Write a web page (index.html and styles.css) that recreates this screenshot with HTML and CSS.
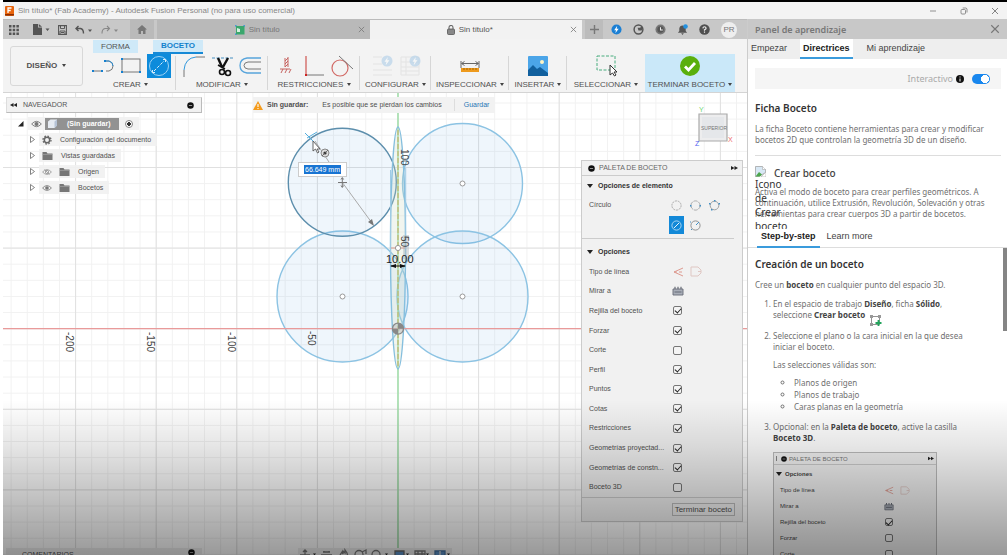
FILE: index.html
```html
<!DOCTYPE html>
<html lang="es">
<head>
<meta charset="utf-8">
<title>Sin título* (Fab Academy) - Autodesk Fusion Personal</title>
<link rel="stylesheet" href="styles.css">
</head>
<body>
<svg class="defs" width="0" height="0" aria-hidden="true">
  <symbol id="folder" viewBox="0 0 10 9"><path d="M0 1h4l1 1.500h5V9H0z" fill="#777"/><path d="M0 3.500h10" stroke="#aaa" stroke-width=".6"/></symbol>
  <symbol id="eye" viewBox="0 0 12 8"><path d="M.7 4Q6-1.800 11.300 4 6 9.800.700 4z" fill="none" stroke="#777" stroke-width="1"/><circle cx="6" cy="4" r="2.200" fill="#777"/></symbol>
  <symbol id="minus-dot" viewBox="0 0 6 6"><circle cx="3" cy="3" r="2.800" fill="#111"/><path d="M1.600 3h2.800" stroke="#ccc" stroke-width=".6"/></symbol>
  <symbol id="ffwd" viewBox="0 0 8 6"><path d="M0 .8 4 3 0 5.200zM4 .8 8 3 4 5.200z" fill="#222"/></symbol>
  <symbol id="cross" viewBox="0 0 8 8"><path d="M1 1l6 6M7 1L1 7" stroke="#777" stroke-width=".9"/></symbol>
  <symbol id="linetype" viewBox="0 0 12 10"><path d="M11 1 2 5l9 4" fill="none" stroke="#dd9a90" stroke-width="1"/><path d="M2 5h9" stroke="#dd9a90" stroke-width="1" stroke-dasharray="3 2"/></symbol>
  <symbol id="centerline" viewBox="0 0 12 11"><path d="M1 1h7l3 3v3l-3 3H1zM8 5.500h3" fill="none" stroke="#dfc7c3" stroke-width="1"/></symbol>
  <symbol id="lookat" viewBox="0 0 12 10"><path d="M1 3h10v6H1z" fill="#a9aeb8" stroke="#666b76" stroke-width=".9"/><path d="M3 3V.8M6 3V.8M9 3V.8M2.500 6h7" stroke="#666b76" stroke-width="1.200"/></symbol>
  <symbol id="bolt" viewBox="0 0 12 12"><circle cx="6" cy="6" r="5.500"/><path d="M6.800 2 3.500 6.700h2l-.8 3.500 3.700-4.900H6.200z" fill="#fff"/></symbol>
</svg>

<div class="app">
  <header class="titlebar">
    <svg width="9" height="10" viewBox="0 0 9 10"><rect width="9" height="10" rx="1" fill="#e8640c"/><path d="M0 8h9v1.500H0z" fill="#8c2e00"/><path d="M3 7V2h3.500M3 4.500h2.700" fill="none" stroke="#fff" stroke-width="1.300"/></svg>
    <h1>Sin título* (Fab Academy) - Autodesk Fusion Personal (no para uso comercial)</h1>
    <div class="window-buttons">
      <button aria-label="Minimizar"><svg width="8" height="8" viewBox="0 0 8 8"><path d="M1 4h6" stroke="#777" stroke-width=".8"/></svg></button>
      <button aria-label="Restaurar"><svg width="8" height="8" viewBox="0 0 8 8"><rect x="1" y="2.500" width="4.500" height="4.500" rx="1" fill="none" stroke="#777" stroke-width=".8"/><path d="M2.700 1h3.500L7 2v3.500" fill="none" stroke="#777" stroke-width=".8"/></svg></button>
      <button aria-label="Cerrar"><svg width="8" height="8"><use href="#cross"/></svg></button>
    </div>
  </header>

  <div class="columns">
    <main class="workspace">
      <div class="tabbar">
        <div class="quick">
          <button aria-label="Panel de datos"><svg width="10" height="10" viewBox="0 0 10 10" fill="#555"><path d="M0 0h2.500v2.500H0zM3.700 0h2.500v2.500H3.700zM7.400 0h2.500v2.500H7.400zM0 3.700h2.500v2.500H0zM3.700 3.700h2.500v2.500H3.700zM7.400 3.700h2.500v2.500H7.400zM0 7.400h2.500v2.500H0zM3.700 7.400h2.500v2.500H3.700zM7.400 7.400h2.500v2.500H7.400z"/></svg></button>
          <button aria-label="Archivo"><svg width="17" height="11" viewBox="0 0 17 11" fill="#555"><path d="M0 0h5v3.500h4V11H0zM5.800 0 9 2.800H5.800zM12.500 4.500h4l-2 2.500z"/></svg></button>
          <button aria-label="Guardar"><svg width="9" height="10" viewBox="0 0 9 10"><path d="M.6.600h7.800v8.800H.6z" fill="#ccc" stroke="#555" stroke-width="1.100"/><path d="M2.500.6v3h4v-3M2 9V6h5v3M3 7.500h3" fill="none" stroke="#555"/></svg></button>
          <button aria-label="Deshacer"><svg width="18" height="10" viewBox="0 0 18 10"><path d="M3.500 1 1 3.500 3.500 6M1 3.500h4.500Q8.500 4 8.500 8.500" fill="none" stroke="#555" stroke-width="1.400"/><path d="M13 4.500h4L15 7z" fill="#555"/></svg></button>
          <button aria-label="Rehacer"><svg width="18" height="10" viewBox="0 0 18 10"><path d="M6 1l2.500 2.500L6 6M8.500 3.500H4Q1 4 1 8.500" fill="none" stroke="#888" stroke-width="1.100"/><path d="M13 4.500h4L15 7z" fill="#888"/></svg></button>
        </div>
        <button class="home" aria-label="Inicio"><svg width="10" height="9" viewBox="0 0 10 9"><path d="M5 0 0 4.500h1.500V9h2.500V6h2v3h2.500V4.500H10z" fill="#777"/></svg></button>
        <div class="doc-tab">
          <span class="doc-name"><svg width="10" height="10" viewBox="0 0 10 10"><rect x="1" y="1" width="8.500" height="8.500" fill="#3aa76d"/><path d="M2 7V3l3 1v3z" fill="#d5f0df"/><path d="M0 2V0h2M8 0h2v2M0 8v2h2" stroke="#2d8fd8" fill="none"/></svg>Sin título</span>
          <button aria-label="Cerrar pestaña"><svg width="7" height="7"><use href="#cross"/></svg></button>
        </div>
        <div class="doc-tab active">
          <span class="doc-name"><svg width="8" height="10" viewBox="0 0 8 10"><rect x=".5" y="4" width="7" height="5.500" rx="1" fill="#888" stroke="#555" stroke-width=".8"/><path d="M2 4V2.500a2 2 0 0 1 4 0V4" fill="none" stroke="#666" stroke-width="1.100"/></svg>Sin título*</span>
          <button aria-label="Cerrar pestaña"><svg width="7" height="7"><use href="#cross"/></svg></button>
        </div>
        <button class="plus" aria-label="Nuevo diseño"><svg width="9" height="9" viewBox="0 0 9 9"><path d="M4.500 0v9M0 4.500h9" stroke="#777" stroke-width="1.400"/></svg></button>
        <div class="status">
          <button aria-label="Extensiones"><svg width="11" height="11" fill="#1b7fd4"><use href="#bolt"/></svg></button>
          <button aria-label="Actualizar"><svg width="11" height="11" viewBox="0 0 12 12"><circle cx="6" cy="6" r="4.800" fill="none" stroke="#555" stroke-width="1.600"/><path d="M5 4h3l1-2 2 2-1.500 3H6z" fill="#555"/></svg></button>
          <button aria-label="Trabajos"><svg width="11" height="11" viewBox="0 0 12 12"><circle cx="6" cy="6" r="5.500" fill="#777"/><circle cx="6" cy="6" r="3.500" fill="#555"/><path d="M6 3.500V6.500h2.500" fill="none" stroke="#eee" stroke-width="1.100"/></svg></button>
          <button aria-label="Notificaciones"><svg width="11" height="11" viewBox="0 0 12 12"><path d="M1 9.500 2.500 7.500V5Q3 1.500 6 1.500T9.500 5v2.500l1.500 2zM4.500 10h3L6 12z" fill="#555"/><circle cx="9.300" cy="2.700" r="2.500" fill="#2391e0"/></svg></button>
          <button aria-label="Ayuda"><svg width="11" height="11" viewBox="0 0 12 12"><circle cx="6" cy="6" r="5.700" fill="#505050"/><path d="M4.200 4.700Q4.500 3 6 3t1.700 1.500Q7.700 5.500 6 6.200V7.300M6 8.300v1.300" fill="none" stroke="#eee" stroke-width="1.300"/></svg></button>
          <button class="avatar">PR</button>
        </div>
      </div>

      <div class="toolbar">
        <button class="mode">DISEÑO <i class="caret"></i></button>
        <div class="ribbon">
          <nav class="ribbon-tabs"><button>FORMA</button><button class="on">BOCETO</button></nav>
          <div class="groups">
            <section class="group first">
              <div class="tools">
                <svg width="24" height="24" viewBox="0 0 24 24"><path d="M2 17h9M15 7h3q4 1 4 5 0 4-4 5h-3" fill="none" stroke="#777" stroke-width="1"/><path d="M14 7h4q4 1 4 5" fill="none" stroke="#2c8cd0"/><path d="M1 16h2v2H1zM10 16h2v2h-2zM13 6h2v2h-2z" fill="#1580d0"/></svg>
                <svg width="24" height="24" viewBox="0 0 24 24"><rect x="3" y="5" width="18" height="13" fill="none" stroke="#777"/><path d="M2 4h2v2H2zM20 17h2v2h-2zM2 17h2v2H2z" fill="#1580d0"/></svg>
                <svg class="selected" width="24" height="24" viewBox="0 0 24 24"><circle cx="12" cy="12" r="9.500" fill="none" stroke="#9fd2f3"/><path d="M7 17 17 7" stroke="#d8effc" stroke-dasharray="3 1.500"/><path d="M5.500 16v2.500H8M16 5.500h2.500V8" fill="none" stroke="#d8effc"/></svg>
              </div>
              <button>CREAR <i class="caret"></i></button>
            </section>
            <section class="group">
              <div class="tools">
                <svg width="24" height="24" viewBox="0 0 24 24"><path d="M2 23V16" stroke="#777"/><path d="M2 16Q3 4 14 3" fill="none" stroke="#2f97dc"/><path d="M14 3h9" stroke="#777"/></svg>
                <svg width="24" height="24" viewBox="0 0 24 24"><path d="M2 4h21" stroke="#458fc2" stroke-dasharray="3 1.500"/><path d="M8 4l4 9M18 4l-5 9" stroke="#111" stroke-width="2.400"/><path d="M8 11l7 4" stroke="#111" stroke-width="1.600"/><circle cx="12" cy="18" r="2.500" fill="none" stroke="#111" stroke-width="1.600"/><circle cx="18" cy="19" r="2.500" fill="none" stroke="#111" stroke-width="1.600"/></svg>
                <svg width="24" height="24" viewBox="0 0 24 24"><path d="M23 4H9q-7 1-7 7.500T9 19h14" fill="none" stroke="#58a5dc" stroke-width="1.300"/><path d="M23 8H10q-4 .5-4 3.500T10 15h13" fill="none" stroke="#777"/></svg>
              </div>
              <button>MODIFICAR <i class="caret"></i></button>
            </section>
            <section class="group">
              <div class="tools">
                <svg width="24" height="24" viewBox="0 0 24 24" fill="none" stroke="#c66461"><path d="M11 4v9M14 3v10M6 15h10M7 19l2-4M11 19l2-4M15 19l2-4M11 7l3-3M11 10l3-3M11 13l3-3"/></svg>
                <svg width="24" height="24" viewBox="0 0 24 24"><path d="M4 2v19" stroke="#cf5551" stroke-width="1.200"/><path d="M4 21h18" stroke="#777"/><path d="M3 20h2v2H3z" fill="#c22"/></svg>
                <svg width="24" height="24" viewBox="0 0 24 24"><circle cx="10" cy="14" r="8" fill="none" stroke="#d26965" stroke-width="1.200"/><path d="M9 2l14 13" stroke="#777"/></svg>
              </div>
              <button>RESTRICCIONES <i class="caret"></i></button>
            </section>
            <section class="group faded">
              <div class="tools">
                <svg width="24" height="24" viewBox="0 0 24 24"><path d="M3 3h9M3 10h9M3 16h19M3 21h19" stroke="#ddd"/><svg x="11" y="1" width="12" height="12" fill="#91c0e5"><use href="#bolt"/></svg></svg>
                <svg width="24" height="24" viewBox="0 0 24 24"><path d="M3 3h18v18H3zM3 8h18M3 13h18M3 17h18M8 3v18" fill="none" stroke="#ddd"/><svg x="11" y="1" width="12" height="12" fill="#91c0e5"><use href="#bolt"/></svg></svg>
              </div>
              <button>CONFIGURAR <i class="caret"></i></button>
            </section>
            <section class="group">
              <div class="tools"><svg width="24" height="24" viewBox="0 0 24 24"><path d="M3 7v7M21 7v7M4 9.500h16M6.500 7.500l-3 2 3 2M17.500 7.500l3 2-3 2" fill="none" stroke="#666"/><path d="M3 14h18v4H3z" fill="#ee9a1d"/><path d="M6 14v2M9 14v2M12 14v2M15 14v2M18 14v2" stroke="#a96700"/></svg></div>
              <button>INSPECCIONAR <i class="caret"></i></button>
            </section>
            <section class="group">
              <div class="tools"><svg width="24" height="24" viewBox="0 0 24 24"><rect x="2" y="2" width="20" height="20" rx="1" fill="#4ba5e8"/><path d="M2 16l5-5 4 4 3-2 8 6v3H2z" fill="#11609e"/><circle cx="16" cy="8" r="2" fill="#fff5c5"/></svg></div>
              <button>INSERTAR <i class="caret"></i></button>
            </section>
            <section class="group">
              <div class="tools"><svg width="24" height="24" viewBox="0 0 24 24"><rect x="3" y="2" width="18" height="14" fill="none" stroke="#48ac7e" stroke-dasharray="3 1.500"/><path d="M16 11v10l2.500-2 2 3 1.500-1-2-3h3z" fill="#fff" stroke="#333"/></svg></div>
              <button>SELECCIONAR <i class="caret"></i></button>
            </section>
            <section class="group finish">
              <div class="tools"><svg width="24" height="24" viewBox="0 0 24 24"><circle cx="12" cy="12" r="10" fill="#5aaf0c"/><path d="M7 12.500l3.500 3.500 6.500-7" fill="none" stroke="#fff" stroke-width="2.800"/></svg></div>
              <button>TERMINAR BOCETO <i class="caret"></i></button>
            </section>
          </div>
        </div>
      </div>

      <div class="canvas">
        <svg class="drawing" viewBox="3 93 744 462" preserveAspectRatio="xMinYMin slice">
          <defs>
            <pattern id="minor" x="397.500" y="328.200" width="16.120" height="16.120" patternUnits="userSpaceOnUse"><path d="M.5 0v16.120M0 .5h16.120" stroke="#f1f1f1" fill="none"/></pattern>
            <pattern id="major" x="397.500" y="328.200" width="80.600" height="80.600" patternUnits="userSpaceOnUse"><path d="M.5 0v80.600M0 .5h80.600" stroke="#e0e0e0" fill="none"/></pattern>
          </defs>
          <rect x="3" y="93" width="744" height="462" fill="#fff"/>
          <rect x="3" y="93" width="744" height="462" fill="url(#minor)"/>
          <rect x="3" y="93" width="744" height="462" fill="url(#major)"/>
          <g fill="#4a9ee0" fill-opacity=".09" stroke="#8cc3e3" stroke-width="1.400">
            <circle cx="462.500" cy="183.500" r="60"/>
            <circle cx="342.500" cy="296.500" r="65.500"/>
            <circle cx="462.500" cy="296.500" r="65.500"/>
            <circle cx="342.300" cy="182.300" r="54" stroke="#5c8eac"/>
          </g>
          <path d="M3 328.700h744" stroke="#e99a9a" stroke-width="1.200"/>
          <path d="M398 93v455" stroke="#8ddc98" stroke-width="1.200"/>
          <ellipse cx="398" cy="248" rx="7.500" ry="121" fill="#c8d9c0" fill-opacity=".25" stroke="#86bfde" stroke-width="1.400"/>
          <path d="M398 130v236" stroke="#c5b061" stroke-dasharray="5 2"/>
          <path d="M390.500 170v88M405.700 168v90" stroke="#9fcbe4"/>
          <path d="M391 248h14" stroke="#db9a90"/>
          <path d="M404 235v24M406 235v24M408 235v24" stroke="#a5aeb5" stroke-width=".8"/>
          <g fill="#fff" stroke="#999"><circle cx="462.500" cy="183.500" r="2.500"/><circle cx="342.500" cy="296.500" r="2.500"/><circle cx="462.500" cy="296.500" r="2.500"/><circle cx="398" cy="248" r="2.600"/></g>
          <circle cx="398" cy="328.700" r="5.500" fill="#bbb" fill-opacity=".5" stroke="#888" stroke-width="1.300"/><path d="M398 328.700v-5.500a5.500 5.500 0 0 1 5.500 5.500zM398 328.700v5.500a5.500 5.500 0 0 1-5.500-5.500z" fill="#888"/>
          <path d="M342 182l30 41M315 141l24 36" stroke="#aaa" stroke-width="1"/>
          <path d="M374 226l-6-4 4-3z" fill="#777"/>
          <path d="M342.300 178v9M338 182.500h9M341 179.500l1.300-2 1.300 2M341 185.500l1.300 2 1.300-2" fill="none" stroke="#777"/>
          <path d="M305 133l9 9M307 138l10-6" stroke="#54aede" stroke-width="1"/>
          <path d="M313 141v10l2.500-2 2 4 1.500-1-2-3h3z" fill="#fff" stroke="#555" stroke-width=".9"/>
          <circle cx="325" cy="153" r="4" fill="#ddd" stroke="#888"/><circle cx="325" cy="153" r="1.600" fill="#333"/><path d="M322 156l6-6" stroke="#555" stroke-width=".8"/>
          <path d="M391 266h14" stroke="#111"/><path d="M390 266l6-2v4zM406 266l-6-2v4z" fill="#111"/>
          <g class="ruler">
            <text transform="translate(401 149) rotate(90)">100</text>
            <text transform="translate(401 236) rotate(90)">50</text>
            <text transform="translate(308 331) rotate(90)">-50</text>
            <text transform="translate(228 332) rotate(90)">-100</text>
            <text transform="translate(147 332) rotate(90)">-150</text>
            <text transform="translate(66 332) rotate(90)">-200</text>
          </g>
          <text class="dim" x="386" y="263">10.00</text>
          <path d="M699 114h28v27h-28z" fill="#ededee" stroke="#aaa" stroke-width="1.200"/><path d="M702 117h22v21h-22z" fill="#e5e7ea"/>
          <g class="cube"><text x="701" y="130" fill="#777">SUPERIOR</text><text x="699" y="112" class="axis" fill="#6ed672">Y</text><text x="728" y="142" class="axis" fill="#ee6c6c">X</text><text x="695" y="146" class="axis" fill="#4f5df0">Z</text></g>
        </svg>

        <aside class="browser">
          <header class="panel-head"><svg class="flip" width="7" height="6"><use href="#ffwd"/></svg><span>NAVEGADOR</span><svg width="7" height="7"><use href="#minus-dot"/></svg></header>
          <ul class="tree">
            <li class="root"><svg class="arrow" width="6" height="6" viewBox="0 0 6 6"><path d="M5.500 0v5.500H0z" fill="#222"/></svg><span class="item"><svg width="11" height="8"><use href="#eye"/></svg><b><svg width="9" height="9" viewBox="0 0 9 9"><path d="M0 2.500 2.500.500H9V6.500L6.500 9H0z" fill="#e6ebf2"/><path d="M6.500 9V2.500L9 .5v6z" fill="#b6c3d6"/></svg>(Sin guardar)</b><input type="radio" checked aria-label="Activar componente"></span></li>
            <li><svg class="arrow" width="5" height="7" viewBox="0 0 5 7"><path d="M.5.500 4.500 3.500.500 6.500z" fill="#fff" stroke="#666" stroke-width=".8"/></svg><span class="item"><svg width="10" height="10" viewBox="0 0 10 10"><circle cx="5" cy="5" r="2.700" fill="none" stroke="#666" stroke-width="1.500"/><circle cx="5" cy="5" r="4" fill="none" stroke="#666" stroke-width="1.300" stroke-dasharray="1.600 1.540"/></svg><span>Configuración del documento</span></span></li>
            <li><svg class="arrow" width="5" height="7" viewBox="0 0 5 7"><path d="M.5.500 4.500 3.500.500 6.500z" fill="#fff" stroke="#666" stroke-width=".8"/></svg><span class="item"><svg width="11" height="9"><use href="#folder"/></svg><span>Vistas guardadas</span></span></li>
            <li><svg class="arrow" width="5" height="7" viewBox="0 0 5 7"><path d="M.5.500 4.500 3.500.500 6.500z" fill="#fff" stroke="#666" stroke-width=".8"/></svg><span class="item"><svg width="10" height="8" viewBox="0 0 12 8"><path d="M.7 4Q6-1.800 11.300 4 6 9.800.700 4zM3 1l6 6" fill="none" stroke="#999"/><circle cx="6" cy="4" r="2" fill="none" stroke="#999"/></svg><svg width="11" height="9"><use href="#folder"/></svg><span>Origen</span></span></li>
            <li><svg class="arrow" width="5" height="7" viewBox="0 0 5 7"><path d="M.5.500 4.500 3.500.500 6.500z" fill="#fff" stroke="#666" stroke-width=".8"/></svg><span class="item"><svg width="10" height="8"><use href="#eye"/></svg><svg width="11" height="9"><use href="#folder"/></svg><span>Bocetos</span></span></li>
          </ul>
        </aside>

        <div class="notice"><svg width="10" height="9" viewBox="0 0 10 9"><path d="M5 0l5 9H0z" fill="#f49b1c"/><path d="M5 3v3M5 7v1" stroke="#fff" stroke-width="1.100"/></svg><b>Sin guardar:</b><span>Es posible que se pierdan los cambios</span><a href="#guardar">Guardar</a></div>

        <input class="dim-input" aria-label="Diámetro" value="66.649 mm">

        <aside class="palette">
          <header><svg width="7" height="7"><use href="#minus-dot"/></svg><span>PALETA DE BOCETO</span><svg width="7" height="6"><use href="#ffwd"/></svg></header>
          <h2>Opciones de elemento</h2>
          <div class="circle-types">
            <span>Círculo</span>
            <div class="choices">
              <button aria-label="Centro y diámetro"><svg width="11" height="11" viewBox="0 0 11 11"><circle cx="5.500" cy="5.500" r="4.600" fill="none" stroke="#999" stroke-width=".8" stroke-dasharray="2 .8"/></svg></button>
              <button aria-label="Dos puntos"><svg width="11" height="11" viewBox="0 0 11 11"><circle cx="5.500" cy="5.500" r="4.600" fill="none" stroke="#999" stroke-width=".8" stroke-dasharray="4 .8"/><path d="M0 5h1.500v1.500H0zM9.500 5H11v1.500H9.500z" fill="#438fc5"/></svg></button>
              <button aria-label="Tres puntos"><svg width="11" height="11" viewBox="0 0 11 11"><circle cx="5.500" cy="5.500" r="4.300" fill="none" stroke="#999" stroke-width=".9"/><path d="M5 0h1.500v1.500H5zM0 3h1.500v1.500H0zM9.500 3H11v1.500H9.500zM2 9h1.500v1.500H2z" fill="#438fc5"/></svg></button>
              <button class="on" aria-label="Dos tangentes"><svg width="11" height="11" viewBox="0 0 11 11"><circle cx="5.500" cy="5.500" r="4.600" fill="none" stroke="#b9def5" stroke-width=".9"/><path d="M3 8l5-5" stroke="#fff" stroke-width=".9"/></svg></button>
              <button aria-label="Tres tangentes"><svg width="11" height="11" viewBox="0 0 11 11"><circle cx="5.500" cy="5.500" r="4.600" fill="none" stroke="#888" stroke-width=".9"/><path d="M6 5l3-3M0 1v2M1 9l1 1" stroke="#438fc5"/></svg></button>
            </div>
          </div>
          <h2>Opciones</h2>
          <div class="options">
            <div class="row"><span>Tipo de línea</span><svg width="12" height="10"><use href="#linetype"/></svg><svg width="12" height="11"><use href="#centerline"/></svg></div>
            <div class="row"><span>Mirar a</span><svg width="12" height="10"><use href="#lookat"/></svg></div>
            <label class="row"><span>Rejilla del boceto</span><input type="checkbox" checked></label>
            <label class="row"><span>Forzar</span><input type="checkbox" checked></label>
            <label class="row"><span>Corte</span><input type="checkbox"></label>
            <label class="row"><span>Perfil</span><input type="checkbox" checked></label>
            <label class="row"><span>Puntos</span><input type="checkbox" checked></label>
            <label class="row"><span>Cotas</span><input type="checkbox" checked></label>
            <label class="row"><span>Restricciones</span><input type="checkbox" checked></label>
            <label class="row"><span>Geometrías proyectad...</span><input type="checkbox" checked></label>
            <label class="row"><span>Geometrías de constn...</span><input type="checkbox" checked></label>
            <label class="row"><span>Boceto 3D</span><input type="checkbox"></label>
          </div>
          <footer><button>Terminar boceto</button></footer>
        </aside>

        <div class="comments"><span>COMENTARIOS</span><svg width="7" height="7"><use href="#minus-dot"/></svg></div>
        <div class="navbar">
          <svg width="154" height="14" viewBox="0 0 154 14" fill="none" stroke="#777" stroke-width="1.300"><path d="M7 2v10M2 7h10M5 4l2-2 2 2M25 4h7M23 7h11M26 4v-1M31 4v-1M42 7l2-3 1 2V3l2 2V2l2 3 1 4"/><circle cx="61" cy="6.500" r="4"/><path d="M64 4l4-2v4"/><circle cx="78" cy="6.500" r="4"/><path d="M97 3h9v7h-9z" fill="#5a8fc5" stroke="#666"/><path d="M117 3h10v7h-10zM117 6h10M120 3v7M124 3v7"/><path d="M137 3h10v7h-10z" fill="#5a8fc5" stroke="#4672a0"/><path d="M142 3v7" stroke="#ddd"/><path d="M15 5.500h3l-1.500 2zM87 5.500h3l-1.500 2zM108 5.500h3l-1.500 2zM128 5.500h3l-1.500 2zM149 5.500h3l-1.500 2z" fill="#222" stroke="none"/></svg>
        </div>
      </div>
    </main>

    <aside class="learn">
      <header class="learn-head"><h2>Panel de aprendizaje</h2><button aria-label="Cerrar panel"><svg width="10" height="10"><use href="#cross"/></svg></button></header>
      <nav class="learn-tabs"><button>Empezar</button><button class="on">Directrices</button><button>Mi aprendizaje</button></nav>
      <div class="intro">
        <label class="interactive"><span>Interactivo</span><svg width="8" height="8" viewBox="0 0 8 8"><circle cx="4" cy="4" r="4" fill="#111"/><path d="M4 1.500v1M4 3.500v3" stroke="#fff"/></svg><input type="checkbox" role="switch" checked></label>
        <h3>Ficha Boceto</h3>
        <p>La ficha Boceto contiene herramientas para crear y modificar bocetos 2D que controlan la geometría 3D de un diseño.</p>
        <hr>
        <div class="command">
          <div class="broken"><svg width="11" height="11" viewBox="0 0 11 11"><path d="M.5.500h7l3 3v3L4 10.500H.5z" fill="#d8e8f5" stroke="#999" stroke-width=".7"/><path d="M.5 10.500 4 6l3 2.500-2 2z" fill="#4ca64c"/><path d="M7.500.5v3h3M11 6 6 11h5z" fill="#fff" stroke="#aaa" stroke-width=".6"/></svg><span>Icono de Crear boceto</span></div>
          <h4>Crear boceto</h4>
          <p>Activa el modo de boceto para crear perfiles geométricos. A continuación, utilice Extrusión, Revolución, Solevación y otras herramientas para crear cuerpos 3D a partir de bocetos.</p>
        </div>
      </div>
      <nav class="step-tabs"><button class="on">Step-by-step</button><button>Learn more</button></nav>
      <article class="lesson">
        <h3>Creación de un boceto</h3>
        <p>Cree un <b>boceto</b> en cualquier punto del espacio 3D.</p>
        <ol>
          <li>En el espacio de trabajo <b>Diseño</b>, ficha <b>Sólido</b>,<br>seleccione <b>Crear boceto</b> <svg width="12" height="11" viewBox="0 0 12 11"><path d="M1.500 1.500h8v8h-8z" fill="none" stroke="#777" stroke-width=".8"/><path d="M0 0h3v3H0zM8 0h3v3H8zM0 8h3v3H0z" fill="#999"/><path d="M8.500 5v6M5.500 8h6" stroke="#22a45c" stroke-width="1.800"/></svg></li>
          <li>Seleccione el plano o la cara inicial en la que desea iniciar el boceto.
            <p>Las selecciones válidas son:</p>
            <ul><li>Planos de origen</li><li>Planos de trabajo</li><li>Caras planas en la geometría</li></ul>
          </li>
          <li>Opcional: en la <b>Paleta de boceto</b>, active la casilla<br><b>Boceto 3D</b>.
            <div class="sample">
              <header><i></i><svg width="6" height="6"><use href="#minus-dot"/></svg><span>PALETA DE BOCETO</span><svg width="6" height="5"><use href="#ffwd"/></svg></header>
              <h5>Opciones</h5>
              <div class="row"><span>Tipo de línea</span><svg width="10" height="9"><use href="#linetype"/></svg><svg width="10" height="9"><use href="#centerline"/></svg></div>
              <div class="row"><span>Mirar a</span><svg width="10" height="9"><use href="#lookat"/></svg></div>
              <label class="row"><span>Rejilla del boceto</span><input type="checkbox" checked></label>
              <label class="row"><span>Forzar</span><input type="checkbox"></label>
              <label class="row"><span>Corte</span><input type="checkbox"></label>
            </div>
          </li>
        </ol>
        <div class="thumb"></div>
      </article>
    </aside>
  </div>
  <div class="shade"></div>
</div>
</body>
</html>
```
FILE: styles.css
```css
* { box-sizing: border-box; }
body { margin: 0; background: #fff; font: 8px/12px "Liberation Sans", Arial, sans-serif; color: #505050; }
button, input { font: inherit; color: inherit; }
button { border: 0; padding: 0; background: none; white-space: nowrap; }
h1, h2, h3, h4, h5, p, ul, ol { margin: 0; padding: 0; }
svg { flex: none; display: block; }
.defs { position: absolute; }
.app { position: relative; height: 100vh; margin-left: 3px; border-top: 2px solid #000; display: flex; flex-direction: column; overflow: hidden; }
.titlebar { height: 17px; flex: none; display: flex; align-items: center; gap: 4px; padding: 0 8px 0 2px; background: #f3f3f3; }
.titlebar h1 { font-size: 8px; font-weight: 400; color: #888; flex: 1; }
.window-buttons { display: flex; gap: 23px; }
.columns { flex: 1; min-height: 0; display: flex; }
.workspace { flex: 1; min-width: 0; display: flex; flex-direction: column; }
.caret { display: inline-block; border: 2px solid transparent; border-top: 3px solid #444; border-bottom: 0; margin-left: 1px; vertical-align: 1px; }

.tabbar { height: 20px; flex: none; display: flex; background: #c8c8c8; border-top: 1px solid #bbb; }
.quick { display: flex; align-items: center; gap: 8px; width: 127px; padding-left: 6px; }
.quick button:nth-child(2) { margin-left: 6px; }
.home { width: 24px; padding-left: 7px; background: #bababa; margin-right: 3px; }
.doc-tab { flex: 1; display: flex; align-items: center; background: #b9b9b9; color: #777; padding-right: 5px; }
.doc-name { flex: 1; display: flex; align-items: center; justify-content: center; gap: 4px; }
.doc-tab.active { background: #f2f2f2; color: #555; }
.plus { width: 18px; margin: 0 8px 0 3px; background: #bcbcbc; display: grid; place-items: center; }
.status { display: flex; align-items: center; gap: 11px; padding-right: 10px; }
.avatar { width: 16px; height: 16px; border-radius: 50%; background: #eee; color: #777; }

.toolbar { flex: none; display: flex; background: #f3f3f3; border-bottom: 1px solid #d4d4d4; padding: 1px 12px 0 7px; }
.mode { width: 73px; height: 40px; margin: 6px 6px 0 0; border: 1px solid #d8d8d8; border-radius: 3px; font-weight: 700; }
.mode .caret { margin-left: 3px; }
.ribbon { flex: 1; min-width: 0; }
.ribbon-tabs { display: flex; gap: 15px; padding-left: 4px; height: 14px; }
.ribbon-tabs button { height: 13px; padding: 0 8px; background: #cfe9f8; color: #555; }
.ribbon-tabs .on { height: 14px; border-bottom: 2px solid #1689d6; color: #1180cc; font-weight: 700; }
.groups { display: grid; grid-template-columns: 87fr 92fr 92fr 71fr 78fr 58fr 78fr 90fr; }
.group { height: 38px; display: flex; flex-direction: column; align-items: center; position: relative; background: linear-gradient(#d6d6d6, #d6d6d6) right 2px / 1px 34px no-repeat; }
.group.first { padding-right: 4px; }
.group:nth-last-child(2) { background: none; }
.group button { height: 14px; line-height: 14px; }
.tools { display: flex; gap: 4px; height: 24px; }
.tools .selected { background: #0d8bdb; }
.faded svg { opacity: .65; }
.group.finish { background: #cae8f9; }

.canvas { position: relative; flex: 1; min-height: 0; overflow: hidden; font-size: 7px; }
.drawing { position: absolute; inset: 0; width: 100%; height: 100%; }
.drawing text { font-family: "Liberation Sans", Arial, sans-serif; }
.ruler { font-size: 10px; fill: #444; }
.dim { font-size: 11px; fill: #222; }
.cube { font-size: 5px; }
.drawing .axis { font-size: 7px; }
.browser { position: absolute; left: 3px; top: 4px; width: 196px; }
.panel-head { display: flex; align-items: center; gap: 6px; height: 16px; padding: 0 7px 0 3px; background: #f1f1f1; border: 1px solid #ddd; border-bottom-color: #bbb; border-right-color: #bbb; color: #555; }
.panel-head span { flex: 1; }
.flip { transform: scaleX(-1); }
.tree { list-style: none; padding: 4px 0 0 24px; display: grid; gap: 3px; }
.tree li { display: flex; align-items: center; gap: 4px; height: 13px; }
.tree .root { margin-left: -12px; }
.item { display: flex; align-items: center; gap: 8px; height: 13px; padding: 0 6px 0 3px; background: #f0f0f0e0; }
.item > svg + svg { margin-left: -1px; }
.root .item { gap: 3px; }
.root b { display: flex; align-items: center; gap: 10px; height: 12px; background: #929292; color: #fff; padding: 0 8px 0 3px; }
.item input { appearance: none; margin: 0 0 0 3px; width: 8px; height: 8px; border: 1px solid #888; border-radius: 50%; background: radial-gradient(#333 0 2px, #fff 2px); }
.notice { position: absolute; left: 250px; top: 4px; height: 16px; display: flex; align-items: center; background: #f2f2f2; padding: 0 6px 0 0; }
.notice b { margin: 0 14px 0 4px; }
.notice span { padding-right: 12px; }
.notice a { color: #2676b5; text-decoration: none; border-left: 1px solid #ddd; padding-left: 9px; }
.dim-input { position: absolute; left: 295px; top: 69px; width: 49px; height: 15px; border: 1px solid #ccc; background: linear-gradient(#1874d2, #1874d2) center / 37px 9px no-repeat #fff; color: #fff; padding: 0 0 0 6px; }

.palette { position: absolute; right: 4px; top: 67px; width: 162px; background: #f1f1f1; border: 1px solid #ccc; }
.palette > header { display: flex; align-items: center; gap: 4px; height: 15px; padding: 0 4px 0 6px; border-bottom: 1px solid #ccc; color: #666; }
.palette > header span { flex: 1; }
.palette h2 { display: flex; align-items: center; gap: 5px; font-size: 7px; padding-left: 5px; height: 20px; color: #333; }
.palette h2::before, .sample h5::before { content: ""; border: 3px solid transparent; border-top: 4px solid #222; border-bottom: 0; }
.circle-types { display: flex; height: 43px; margin: 0 8px 3px 0; padding-left: 7px; border-bottom: 1px solid #ccc; }
.circle-types > span { width: 80px; padding-top: 3px; }
.choices { display: grid; grid-template-columns: repeat(3, 15px); grid-auto-rows: 18px; gap: 2px 4px; }
.choices button { display: grid; place-items: center; }
.choices .on { background: #1389d8; }
.options { display: grid; grid-auto-rows: 1fr; height: 235px; padding-left: 7px; }
.row { display: flex; align-items: center; gap: 6px; }
.row span { width: 77px; white-space: nowrap; }
.row input { appearance: none; position: relative; width: 9px; height: 9px; margin: 0 1px; border: 1px solid #777; border-radius: 2px; background: #f4f4f4; }
.row input:checked::after { content: ""; position: absolute; left: 2px; top: 0; width: 3px; height: 5px; border: solid #222; border-width: 0 1px 1px 0; transform: rotate(42deg); }
.palette footer { border-top: 1px solid #ccc; height: 24px; padding: 5px 7px; text-align: right; }
.palette footer button { height: 13px; padding: 0 2px; border: 1px solid #bbb; font-size: 8px; line-height: 11px; }
.comments { position: absolute; left: 3px; bottom: 0; width: 196px; height: 7px; overflow: hidden; display: flex; justify-content: space-between; background: #eee; padding: 1px 7px 0 16px; }
.navbar { position: absolute; left: 295px; bottom: 0; height: 7px; overflow: hidden; background: #eee; }

.learn { width: 260px; flex: none; display: flex; flex-direction: column; border-left: 1px solid #ccc; background: #fff; font-family: "Noto Sans", sans-serif; line-height: 11px; color: #707070; }
.learn-head { display: flex; justify-content: space-between; align-items: center; height: 20px; flex: none; background: #c8c8c8; padding: 0 7px; }
.learn-head h2 { font-size: 9px; font-weight: 600; color: #777; }
.learn-tabs { flex: none; height: 20px; display: flex; background: #eee; font-family: "Liberation Sans", Arial, sans-serif; font-size: 9px; color: #444; padding-left: 3px; }
.learn-tabs button { height: 20px; padding-bottom: 2px; }
.learn-tabs .on { background: #fff; border-bottom: 2px solid #3a9bdc; font-weight: 700; color: #222; padding: 0 3px; margin: 0 14px 0 13px; }
.intro { flex: none; padding: 9px 6px 0 7px; height: 170px; overflow: hidden; }
.interactive { display: flex; align-items: center; justify-content: flex-end; gap: 3px; height: 21px; padding-right: 11px; background: #f5f5f5; font-size: 9px; color: #aaa; }
.interactive input { appearance: none; width: 18px; height: 10px; margin: 0 0 0 5px; border-radius: 5px; background: radial-gradient(circle at 13px 5px, #fff 0 4px, transparent 4px) #1987ee; }
.intro h3, .lesson h3 { font-size: 10px; line-height: 14px; font-weight: 600; color: #333; }
.intro h3 { margin: 12px 0 8px; }
.intro hr { border: 0; border-top: 1px solid #ddd; margin: 10px 0; }
.command { position: relative; }
.command h4 { font-size: 10px; line-height: 14px; font-weight: 500; color: #444; padding-left: 19px; margin-bottom: 6px; }
.broken { position: absolute; left: 0; top: 0; width: 28px; font-size: 10px; line-height: 14px; color: #333; }
.step-tabs { flex: none; display: flex; align-items: flex-start; gap: 7px; height: 19px; border-bottom: 1px solid #ddd; padding-left: 9px; font-family: "Liberation Sans", Arial, sans-serif; color: #444; font-size: 9px; }
.step-tabs button { height: 19px; padding-bottom: 4px; }
.step-tabs .on { border-bottom: 2px solid #3a9bdc; padding: 0 4px 2px; font-weight: 700; color: #222; }
.lesson { position: relative; flex: 1; min-height: 0; overflow: hidden; padding: 9px 24px 0 7px; }
.lesson h3 { margin-bottom: 8px; }
.lesson b { color: #444; }
.lesson ol { margin-top: 8px; padding-left: 18px; }
.lesson ol > li { margin-bottom: 8px; }
.lesson li svg { display: inline-block; vertical-align: -4px; margin: -4px 0 -4px 3px; }
.lesson li p { margin: 7px 0; }
.lesson ul { padding-left: 21px; list-style: circle; line-height: 12px; }
.thumb { position: absolute; right: 0; top: 0; width: 4px; height: 83px; background: #858585; }
.sample { width: 164px; margin-top: 9px; border: 1px solid #bbb; font: 6px/10px "Liberation Sans", Arial, sans-serif; background: #f2f2f2; color: #444; }
.sample header { display: flex; align-items: center; gap: 2px; height: 12px; border-bottom: 1px solid #ccc; padding: 0 2px; color: #777; }
.sample header span { flex: 1; }
.sample header i { width: 2px; height: 5px; border-left: 1px solid #888; margin-right: 1px; }
.lesson .sample svg { display: block; margin: 0; }
.sample h5 { display: flex; align-items: center; gap: 3px; font-size: 6px; height: 17px; padding-left: 2px; }
.sample .row { height: 16px; padding-left: 6px; }
.sample .row span { width: 98px; }
.sample .row input { width: 8px; height: 8px; }
.sample .row input:checked::after { left: 1px; }

.shade { position: absolute; inset: auto 0 0; height: 155px; pointer-events: none; background: linear-gradient(rgba(0,0,0,0), rgba(0,0,0,.1) 30%, rgba(0,0,0,.25) 65%, rgba(0,0,0,.4)); }
```
